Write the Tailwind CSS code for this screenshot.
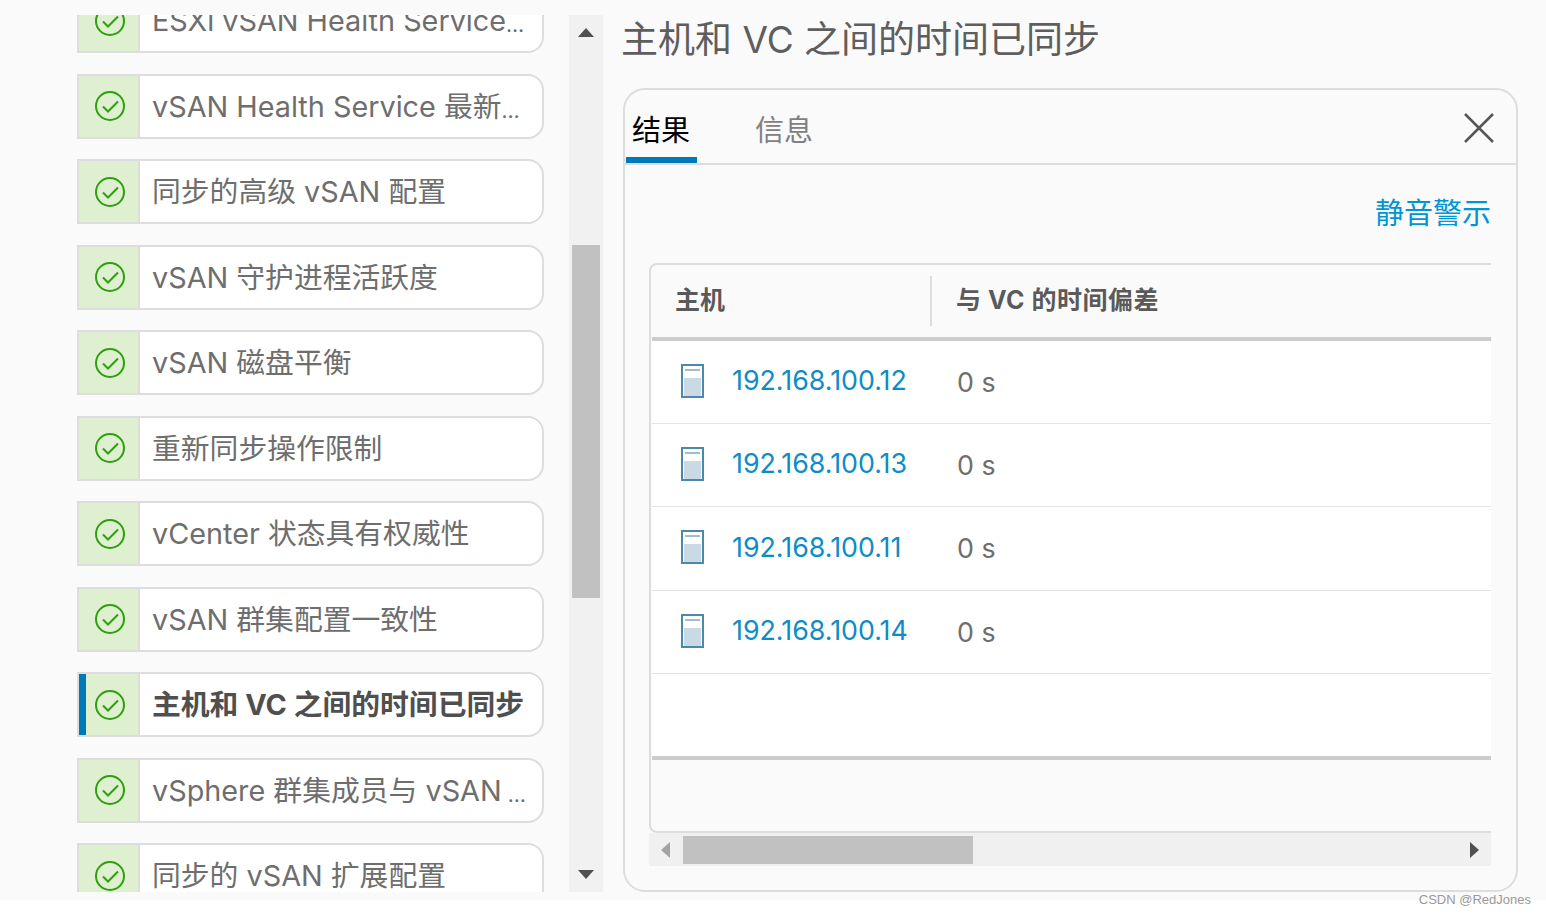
<!DOCTYPE html>
<html lang="zh-CN">

<head>
  <meta charset="UTF-8">
  <meta name="viewport" content="width=device-width, initial-scale=1.0">
  <title>vSAN Skyline Health</title>
  <script src="https://cdn.jsdelivr.net/npm/@tailwindcss/browser@4"></script>
</head>

<body class="relative bg-white h-[914px] overflow-hidden font-['Inter','Noto_Sans_CJK_SC',sans-serif]">
  <div class="flex h-[900px] bg-[#fafafa] pt-[15px] pb-2">

    <!-- check list -->
    <div class="w-[569px] h-[877px] overflow-hidden pl-[77px] pr-[25px] shrink-0">
      <div class="flex flex-col gap-[20.5px] -mt-[27px] text-[28.8px] text-[#6e6e6e]">
        <div class="flex h-[65px] shrink-0 bg-white border-2 border-[#ddd] rounded-r-2xl overflow-hidden">
          <div class="w-[61px] shrink-0 bg-[#dff0d0] border-r-2 border-[#ddd] flex items-center justify-center pl-[2px]"><svg class="w-[32px] h-[32px]" viewBox="0 0 32 32" fill="none" stroke="#2f9e0f" stroke-width="2"><circle cx="16" cy="16" r="14"/><path d="M9 16.5l5 5 10-10"/></svg></div>
          <div class="pl-3 pt-[1px] flex items-center whitespace-nowrap">ESXi vSAN Health Service<span class="text-[21px] pt-[8px]">…</span></div>
        </div>
        <div class="flex h-[65px] shrink-0 bg-white border-2 border-[#ddd] rounded-r-2xl overflow-hidden">
          <div class="w-[61px] shrink-0 bg-[#dff0d0] border-r-2 border-[#ddd] flex items-center justify-center pl-[2px]"><svg class="w-[32px] h-[32px]" viewBox="0 0 32 32" fill="none" stroke="#2f9e0f" stroke-width="2"><circle cx="16" cy="16" r="14"/><path d="M9 16.5l5 5 10-10"/></svg></div>
          <div class="pl-3 pt-[1px] flex items-center whitespace-nowrap">vSAN Health Service 最新<span class="text-[21px] pt-[8px]">…</span></div>
        </div>
        <div class="flex h-[65px] shrink-0 bg-white border-2 border-[#ddd] rounded-r-2xl overflow-hidden">
          <div class="w-[61px] shrink-0 bg-[#dff0d0] border-r-2 border-[#ddd] flex items-center justify-center pl-[2px]"><svg class="w-[32px] h-[32px]" viewBox="0 0 32 32" fill="none" stroke="#2f9e0f" stroke-width="2"><circle cx="16" cy="16" r="14"/><path d="M9 16.5l5 5 10-10"/></svg></div>
          <div class="pl-3 pt-[1px] flex items-center whitespace-nowrap">同步的高级 vSAN 配置</div>
        </div>
        <div class="flex h-[65px] shrink-0 bg-white border-2 border-[#ddd] rounded-r-2xl overflow-hidden">
          <div class="w-[61px] shrink-0 bg-[#dff0d0] border-r-2 border-[#ddd] flex items-center justify-center pl-[2px]"><svg class="w-[32px] h-[32px]" viewBox="0 0 32 32" fill="none" stroke="#2f9e0f" stroke-width="2"><circle cx="16" cy="16" r="14"/><path d="M9 16.5l5 5 10-10"/></svg></div>
          <div class="pl-3 pt-[1px] flex items-center whitespace-nowrap">vSAN 守护进程活跃度</div>
        </div>
        <div class="flex h-[65px] shrink-0 bg-white border-2 border-[#ddd] rounded-r-2xl overflow-hidden">
          <div class="w-[61px] shrink-0 bg-[#dff0d0] border-r-2 border-[#ddd] flex items-center justify-center pl-[2px]"><svg class="w-[32px] h-[32px]" viewBox="0 0 32 32" fill="none" stroke="#2f9e0f" stroke-width="2"><circle cx="16" cy="16" r="14"/><path d="M9 16.5l5 5 10-10"/></svg></div>
          <div class="pl-3 pt-[1px] flex items-center whitespace-nowrap">vSAN 磁盘平衡</div>
        </div>
        <div class="flex h-[65px] shrink-0 bg-white border-2 border-[#ddd] rounded-r-2xl overflow-hidden">
          <div class="w-[61px] shrink-0 bg-[#dff0d0] border-r-2 border-[#ddd] flex items-center justify-center pl-[2px]"><svg class="w-[32px] h-[32px]" viewBox="0 0 32 32" fill="none" stroke="#2f9e0f" stroke-width="2"><circle cx="16" cy="16" r="14"/><path d="M9 16.5l5 5 10-10"/></svg></div>
          <div class="pl-3 pt-[1px] flex items-center whitespace-nowrap">重新同步操作限制</div>
        </div>
        <div class="flex h-[65px] shrink-0 bg-white border-2 border-[#ddd] rounded-r-2xl overflow-hidden">
          <div class="w-[61px] shrink-0 bg-[#dff0d0] border-r-2 border-[#ddd] flex items-center justify-center pl-[2px]"><svg class="w-[32px] h-[32px]" viewBox="0 0 32 32" fill="none" stroke="#2f9e0f" stroke-width="2"><circle cx="16" cy="16" r="14"/><path d="M9 16.5l5 5 10-10"/></svg></div>
          <div class="pl-3 pt-[1px] flex items-center whitespace-nowrap">vCenter 状态具有权威性</div>
        </div>
        <div class="flex h-[65px] shrink-0 bg-white border-2 border-[#ddd] rounded-r-2xl overflow-hidden">
          <div class="w-[61px] shrink-0 bg-[#dff0d0] border-r-2 border-[#ddd] flex items-center justify-center pl-[2px]"><svg class="w-[32px] h-[32px]" viewBox="0 0 32 32" fill="none" stroke="#2f9e0f" stroke-width="2"><circle cx="16" cy="16" r="14"/><path d="M9 16.5l5 5 10-10"/></svg></div>
          <div class="pl-3 pt-[1px] flex items-center whitespace-nowrap">vSAN 群集配置一致性</div>
        </div>
        <!-- selected -->
        <div class="flex h-[65px] shrink-0 bg-white border-2 border-[#ddd] rounded-r-2xl overflow-hidden">
          <div class="w-[7px] shrink-0 bg-[#0079b8]"></div>
          <div class="w-[54px] shrink-0 bg-[#dff0d0] border-r-2 border-[#ddd] flex items-center justify-center"><svg class="w-[32px] h-[32px] -ml-[5px]" viewBox="0 0 32 32" fill="none" stroke="#2f9e0f" stroke-width="2"><circle cx="16" cy="16" r="14"/><path d="M9 16.5l5 5 10-10"/></svg></div>
          <div class="pl-3 pt-[1px] flex items-center whitespace-nowrap font-bold text-[#4f4f4f]">主机和 VC 之间的时间已同步</div>
        </div>
        <div class="flex h-[65px] shrink-0 bg-white border-2 border-[#ddd] rounded-r-2xl overflow-hidden">
          <div class="w-[61px] shrink-0 bg-[#dff0d0] border-r-2 border-[#ddd] flex items-center justify-center pl-[2px]"><svg class="w-[32px] h-[32px]" viewBox="0 0 32 32" fill="none" stroke="#2f9e0f" stroke-width="2"><circle cx="16" cy="16" r="14"/><path d="M9 16.5l5 5 10-10"/></svg></div>
          <div class="pl-3 pt-[1px] flex items-center whitespace-nowrap">vSphere 群集成员与 vSAN <span class="text-[21px] pt-[8px] pl-[6px]">…</span></div>
        </div>
        <div class="flex h-[65px] shrink-0 bg-white border-2 border-[#ddd] rounded-r-2xl overflow-hidden">
          <div class="w-[61px] shrink-0 bg-[#dff0d0] border-r-2 border-[#ddd] flex items-center justify-center pl-[2px]"><svg class="w-[32px] h-[32px]" viewBox="0 0 32 32" fill="none" stroke="#2f9e0f" stroke-width="2"><circle cx="16" cy="16" r="14"/><path d="M9 16.5l5 5 10-10"/></svg></div>
          <div class="pl-3 pt-[1px] flex items-center whitespace-nowrap">同步的 vSAN 扩展配置</div>
        </div>
      </div>
    </div>

    <!-- list scrollbar -->
    <div class="w-[34px] h-[877px] shrink-0 bg-[#f1f1f1] flex flex-col items-center py-[13px]">
      <svg class="w-[16px] h-[9px] shrink-0" viewBox="0 0 16 9" fill="#505050"><path d="M8 0l8 9H0z"/></svg>
      <div class="w-[28px] h-[353px] shrink-0 bg-[#c1c1c1] mt-[208px]"></div>
      <svg class="w-[16px] h-[9px] shrink-0 mt-auto" viewBox="0 0 16 9" fill="#505050"><path d="M0 0h16l-8 9z"/></svg>
    </div>

    <!-- detail -->
    <div class="flex-1 flex flex-col pl-[19px] pr-[28px]">
      <h1 class="h-[74px] -mb-[1px] -ml-[1px] pb-[25px] flex items-center text-[37px] leading-none text-[#5e5e5e] whitespace-nowrap">主机和 VC 之间的时间已同步</h1>
      <div class="ml-[1px] h-[804px] border-2 border-[#ddd] rounded-[22px] flex flex-col">
        <div class="h-[75px] shrink-0 border-b-2 border-[#ddd] flex items-end pl-[1px] pr-[21px]">
          <div class="w-[71px] h-[47px] border-b-[6px] border-[#0079b8] text-[29px] leading-none text-black pl-[6px] whitespace-nowrap">结果</div>
          <div class="ml-[58px] h-[47px] text-[29px] leading-none text-[#808080]">信息</div>
          <svg class="ml-auto mb-[19px] w-[32px] h-[32px]" viewBox="0 0 32 32" fill="none" stroke="#565656" stroke-width="2.5"><path d="M2 2l28 28M30 2L2 30"/></svg>
        </div>
        <div class="flex-1 flex flex-col pl-[24px] pr-[25px]">
          <div class="h-[98px] shrink-0 pt-[34px] text-right text-[29px] leading-none text-[#0095d3]">静音警示</div>
          <div class="h-[570px] shrink-0 border-t-2 border-l-2 border-b-2 border-[#ddd] rounded-l-lg flex flex-col">
            <div class="h-[72px] shrink-0 flex items-center text-[25px] font-bold text-[#5a5a5a]">
              <div class="w-[281px] h-[50px] shrink-0 pl-[24px] border-r-2 border-[#ddd] flex items-center">主机</div>
              <div class="pl-[24px] whitespace-nowrap tracking-[0.5px]">与 VC 的时间偏差</div>
            </div>
            <div class="h-[423px] shrink-0 ml-[1px] bg-white border-t-4 border-b-4 border-[#ccc] flex flex-col text-[26.8px]">
              <div class="h-[83px] shrink-0 border-b border-[#e3e3e3] flex items-center">
                <div class="w-[280px] shrink-0 pl-[29px] pb-[3px] flex items-center gap-[28px]"><svg class="w-[23px] h-[34px] shrink-0" viewBox="0 0 23 34"><rect x="1" y="1" width="21" height="32" fill="#fff" stroke="#4a8aa8" stroke-width="2"/><path d="M4 6h15" stroke="#9fbdcb" stroke-width="2"/><rect x="3" y="14" width="17" height="18" fill="#c9dae4"/></svg><span class="text-[#0e8cc5]">192.168.100.12</span></div>
                <div class="pl-[25px] text-[#6e6e6e]">0 s</div>
              </div>
              <div class="h-[83px] shrink-0 border-b border-[#e3e3e3] flex items-center">
                <div class="w-[280px] shrink-0 pl-[29px] pb-[3px] flex items-center gap-[28px]"><svg class="w-[23px] h-[34px] shrink-0" viewBox="0 0 23 34"><rect x="1" y="1" width="21" height="32" fill="#fff" stroke="#4a8aa8" stroke-width="2"/><path d="M4 6h15" stroke="#9fbdcb" stroke-width="2"/><rect x="3" y="14" width="17" height="18" fill="#c9dae4"/></svg><span class="text-[#0e8cc5]">192.168.100.13</span></div>
                <div class="pl-[25px] text-[#6e6e6e]">0 s</div>
              </div>
              <div class="h-[84px] shrink-0 border-b border-[#e3e3e3] flex items-center">
                <div class="w-[280px] shrink-0 pl-[29px] pb-[3px] flex items-center gap-[28px]"><svg class="w-[23px] h-[34px] shrink-0" viewBox="0 0 23 34"><rect x="1" y="1" width="21" height="32" fill="#fff" stroke="#4a8aa8" stroke-width="2"/><path d="M4 6h15" stroke="#9fbdcb" stroke-width="2"/><rect x="3" y="14" width="17" height="18" fill="#c9dae4"/></svg><span class="text-[#0e8cc5]">192.168.100.11</span></div>
                <div class="pl-[25px] text-[#6e6e6e]">0 s</div>
              </div>
              <div class="h-[83px] shrink-0 border-b border-[#e3e3e3] flex items-center">
                <div class="w-[280px] shrink-0 pl-[29px] pb-[3px] flex items-center gap-[28px]"><svg class="w-[23px] h-[34px] shrink-0" viewBox="0 0 23 34"><rect x="1" y="1" width="21" height="32" fill="#fff" stroke="#4a8aa8" stroke-width="2"/><path d="M4 6h15" stroke="#9fbdcb" stroke-width="2"/><rect x="3" y="14" width="17" height="18" fill="#c9dae4"/></svg><span class="text-[#0e8cc5]">192.168.100.14</span></div>
                <div class="pl-[25px] text-[#6e6e6e]">0 s</div>
              </div>
            </div>
          </div>
          <!-- table scrollbar -->
          <div class="h-[33px] shrink-0 bg-[#f0f0f0] flex items-center pl-[12px] pr-[12px]">
            <svg class="w-[9px] h-[16px] shrink-0" viewBox="0 0 9 16" fill="#a3a3a3"><path d="M9 0v16L0 8z"/></svg>
            <div class="ml-[13px] w-[290px] h-[28px] bg-[#c1c1c1]"></div>
            <svg class="ml-auto w-[9px] h-[16px] shrink-0" viewBox="0 0 9 16" fill="#505050"><path d="M0 0l9 8-9 8z"/></svg>
          </div>
        </div>
      </div>
    </div>
  </div>

  <!-- watermark -->
  <div class="absolute right-[15px] bottom-[8px] text-[13px] leading-none text-[#999] font-['Liberation_Sans',sans-serif]">CSDN @RedJones</div>
</body>

</html>
